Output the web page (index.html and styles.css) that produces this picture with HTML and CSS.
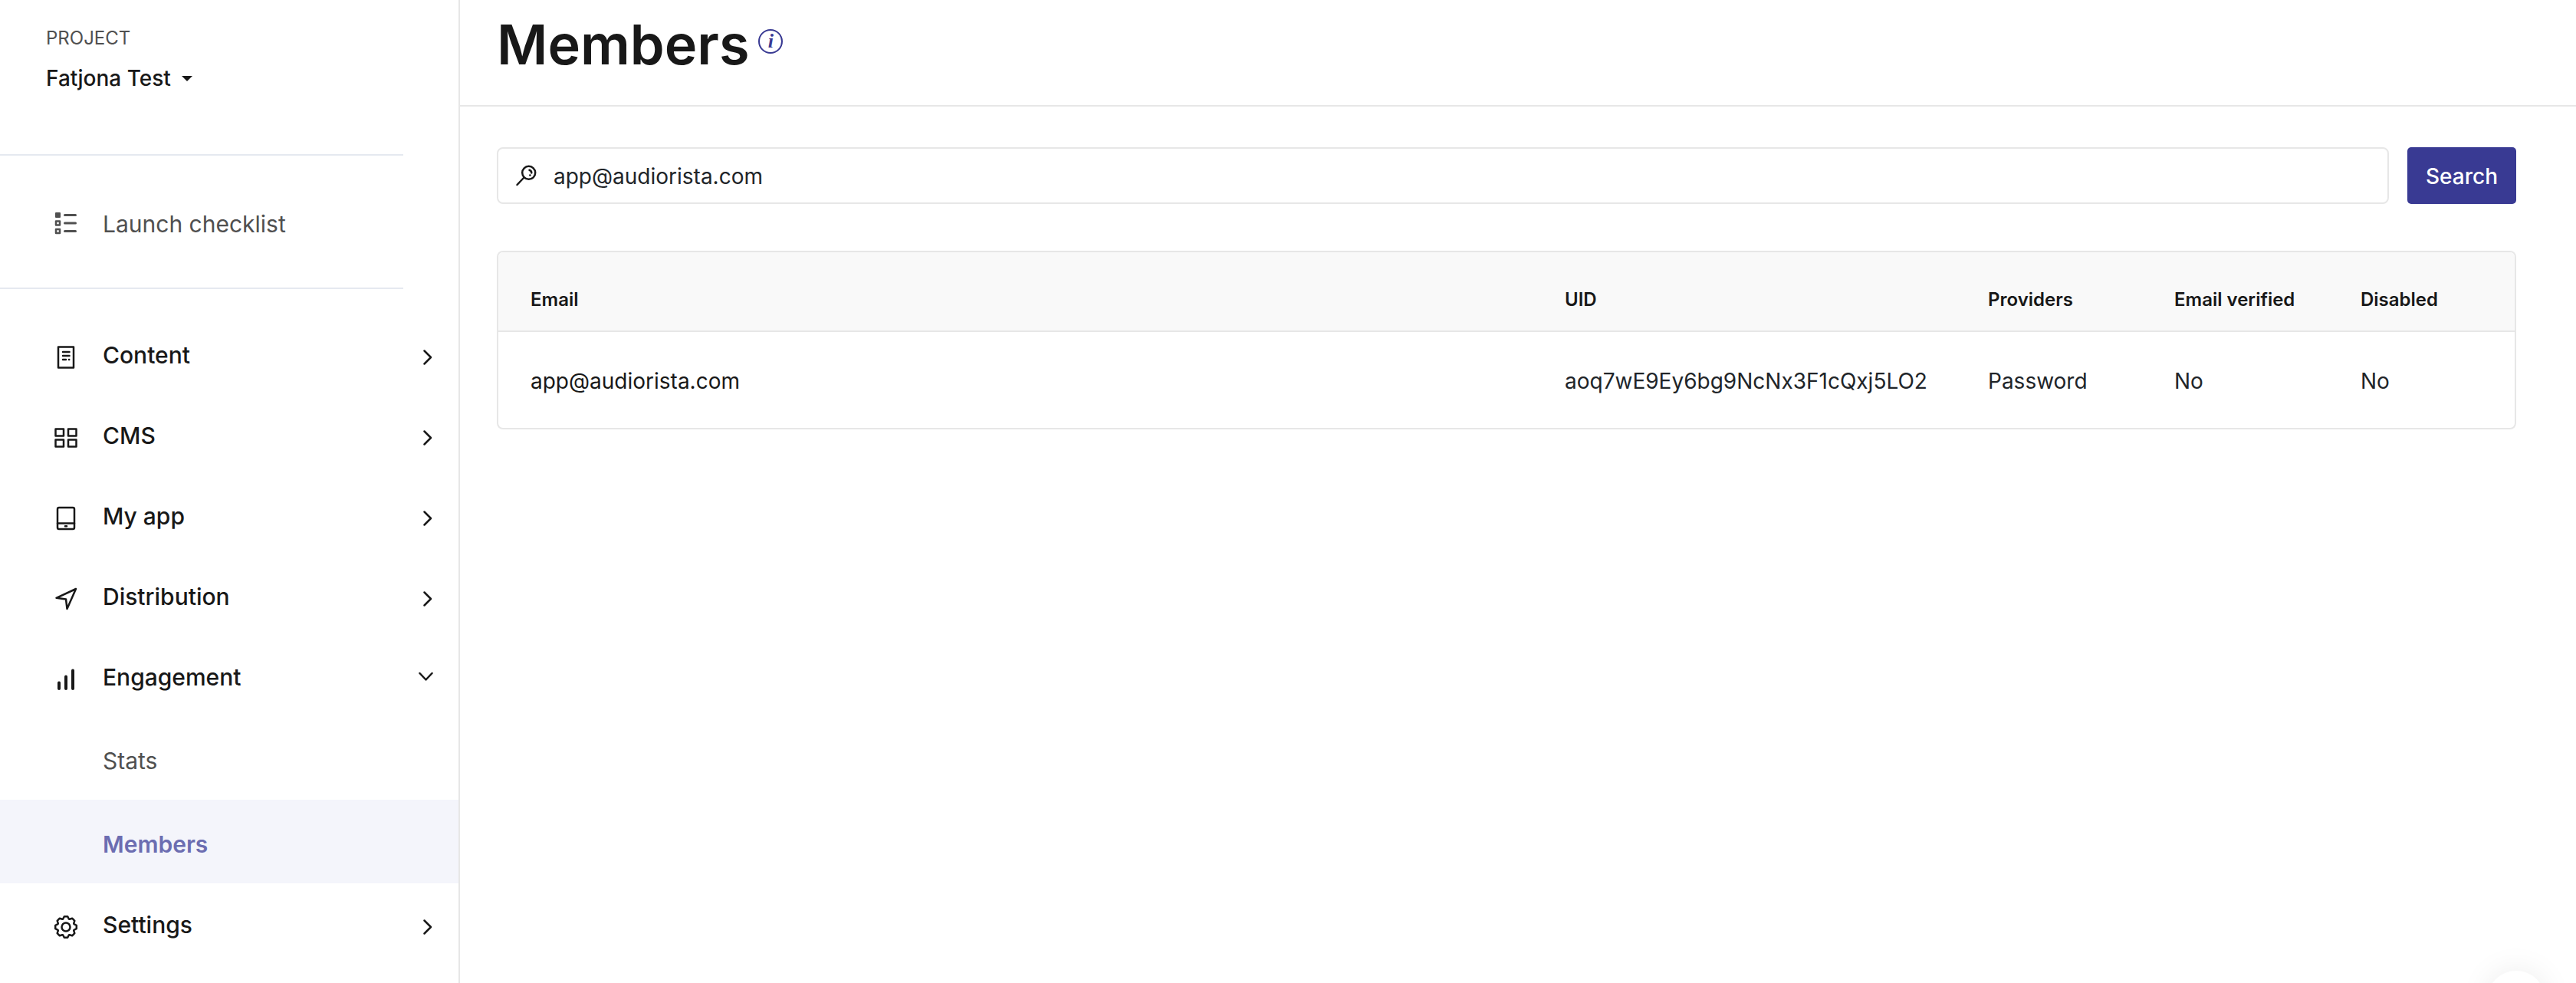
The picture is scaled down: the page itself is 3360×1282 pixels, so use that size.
FILE: index.html
```
<!DOCTYPE html>
<html lang="en">
<head>
	<meta charset="UTF-8">
	<title>Members</title>
	<link rel="stylesheet" href="styles.css">
</head>
<body>
<div class="layout">
	<aside class="sidebar">
		<div class="project">
			<div class="project-label">PROJECT</div>
			<button class="project-select">Fatjona Test <span class="caret"></span></button>
		</div>
		<div class="launch">
			<a class="launch-link" href="#">
				<svg class="icon" viewBox="0 0 40 40">
					<rect class="solid" x="6" y="5" width="7" height="7" rx="1"/>
					<rect x="7" y="16.5" width="5" height="5"/>
					<rect x="7" y="27" width="5" height="5"/>
					<path class="thick" d="M18.5 8.5h14M18.5 19h14M18.5 29.5h14"/>
				</svg>
				Launch checklist
			</a>
		</div>
		<nav class="nav">
			<button class="nav-item">
				<svg class="icon" viewBox="0 0 40 40">
					<rect x="10" y="6.5" width="20" height="27"/>
					<path d="M16 13h8.5M16 18h8.5M16 23h4M24 23h.2"/>
				</svg>
				Content
				<svg class="arrow" viewBox="0 0 24 24"><path d="M7.5 3.5L16 12L7.5 20.5"/></svg>
			</button>
			<button class="nav-item">
				<svg class="icon" viewBox="0 0 40 40">
					<rect x="6.5" y="8.5" width="10.5" height="9"/>
					<rect x="23" y="8.5" width="10.5" height="9"/>
					<rect x="6.5" y="22.5" width="10.5" height="9"/>
					<rect x="23" y="22.5" width="10.5" height="9"/>
				</svg>
				CMS
				<svg class="arrow" viewBox="0 0 24 24"><path d="M7.5 3.5L16 12L7.5 20.5"/></svg>
			</button>
			<button class="nav-item">
				<svg class="icon" viewBox="0 0 40 40">
					<rect x="9" y="6" width="22" height="28" rx="2"/>
					<path d="M9 26.5h22M19 30.3h2"/>
				</svg>
				My app
				<svg class="arrow" viewBox="0 0 24 24"><path d="M7.5 3.5L16 12L7.5 20.5"/></svg>
			</button>
			<button class="nav-item">
				<svg class="icon" viewBox="0 0 40 40">
					<path d="M33 7L7.5 18.8L20 20.5L21.5 33Z"/>
				</svg>
				Distribution
				<svg class="arrow" viewBox="0 0 24 24"><path d="M7.5 3.5L16 12L7.5 20.5"/></svg>
			</button>
			<button class="nav-item">
				<svg class="icon" viewBox="0 0 40 40">
					<path class="bars" d="M11 24.5V32M20 16.5V32M29 8.5V32"/>
				</svg>
				Engagement
				<svg class="arrow down" viewBox="0 0 24 24"><path d="M1.5 7L9.5 15.5L17.5 7"/></svg>
			</button>
			<a class="sub-item" href="#">Stats</a>
			<a class="sub-item active" href="#">Members</a>
			<button class="nav-item">
				<svg class="icon" viewBox="0 0 40 40">
					<path d="M17.8 6.2H22.2L23.8 9.5L24.7 9.8L28.2 8.7L31.3 11.8L30.2 15.3L30.5 16.2L33.8 17.8V22.2L30.5 23.8L30.2 24.7L31.3 28.2L28.2 31.3L24.7 30.2L23.8 30.5L22.2 33.8H17.8L16.2 30.5L15.3 30.2L11.8 31.3L8.7 28.2L9.8 24.7L9.5 23.8L6.2 22.2V17.8L9.5 16.2L9.8 15.3L8.7 11.8L11.8 8.7L15.3 9.8L16.2 9.5Z"/>
					<circle cx="20" cy="20" r="5.5"/>
				</svg>
				Settings
				<svg class="arrow" viewBox="0 0 24 24"><path d="M7.5 3.5L16 12L7.5 20.5"/></svg>
			</button>
		</nav>
	</aside>
	<main class="main">
		<header class="header">
			<h1 class="title">Members</h1>
			<button class="info" aria-label="About members">i</button>
		</header>
		<div class="content">
			<form class="search">
				<label class="search-box">
					<svg class="search-icon" viewBox="0 0 32 32">
						<circle cx="19.7" cy="12.3" r="8.5"/>
						<path d="M13.5 18.5L4.5 28M20.5 8.8a4 4 0 0 1 2.8 3.6M21.3 15.6h.2"/>
					</svg>
					<input class="search-input" type="text" aria-label="Search members" value="app@audiorista.com">
				</label>
				<button class="search-btn" type="button">Search</button>
			</form>
			<div class="table-wrap">
				<table class="table">
					<thead>
						<tr>
							<th>Email</th>
							<th class="col-uid">UID</th>
							<th class="col-small">Providers</th>
							<th class="col-small">Email verified</th>
							<th class="col-small">Disabled</th>
						</tr>
					</thead>
					<tbody>
						<tr>
							<td class="email">app@audiorista.com</td>
							<td>aoq7wE9Ey6bg9NcNx3F1cQxj5LO2</td>
							<td>Password</td>
							<td>No</td>
							<td>No</td>
						</tr>
					</tbody>
				</table>
			</div>
		</div>
	</main>
</div>
<button class="chat" aria-label="Chat"></button>
</body>
</html>
```
FILE: styles.css
```
* {
	box-sizing: border-box;
}
body {
	margin: 0;
	background-color: #fff;
	color: #181818;
	font-family: Inter, "Liberation Sans", sans-serif;
	font-size: 28px;
}
button, input {
	font: inherit;
	color: inherit;
	border: none;
	background: none;
	padding: 0;
}
a {
	color: inherit;
	text-decoration: none;
}
.layout {
	display: flex;
	min-height: 100vh;
}

/* sidebar */
.sidebar {
	flex: none;
	width: 600px;
	border-right: 2px solid #e7e7e7;
}
.project {
	margin-right: 72px;
	padding: 36px 0 79px 60px;
	border-bottom: 2px solid #e5e9f0;
}
.project-label {
	margin-bottom: 18px;
	color: #505050;
	font-size: 24px;
	line-height: 28px;
}
.project-select {
	display: flex;
	align-items: center;
	gap: 14px;
	font-weight: 500;
	line-height: 40px;
}
.caret {
	border: 7px solid transparent;
	border-top-color: #181818;
	border-bottom: none;
}
.launch {
	margin-right: 72px;
	border-bottom: 2px solid #e5e9f0;
}
.launch-link {
	display: flex;
	align-items: center;
	gap: 28px;
	height: 172px;
	padding: 6px 0 0 66px;
	color: #505050;
	font-size: 30px;
}
.nav {
	padding-top: 32px;
	font-size: 30px;
}
.nav-item {
	display: flex;
	align-items: center;
	gap: 28px;
	width: 100%;
	height: 105px;
	padding: 2px 28px 0 66px;
	font-weight: 500;
}
.icon {
	flex: none;
	width: 40px;
	height: 40px;
	fill: none;
	stroke: currentColor;
	stroke-width: 2.5px;
	stroke-linecap: round;
	stroke-linejoin: round;
}
.icon .solid {
	fill: currentColor;
	stroke: none;
}
.icon .thick {
	stroke-width: 3px;
}
.icon .bars {
	stroke-width: 4px;
}
.arrow {
	width: 24px;
	height: 24px;
	margin-left: auto;
	fill: none;
	stroke: currentColor;
	stroke-width: 2.5px;
	stroke-linecap: round;
	stroke-linejoin: round;
}
.nav-item .icon, .nav-item .arrow {
	margin-top: 6px;
}
.nav-item .arrow.down {
	margin-top: 0;
}
.sub-item {
	display: flex;
	align-items: center;
	height: 109px;
	padding: 6px 0 0 134px;
	color: #505050;
}
.sub-item.active {
	background-color: #f4f5fb;
	color: #6c6db1;
	font-weight: 600;
}

/* page */
.main {
	flex: 1;
	min-width: 0;
}
.header {
	display: flex;
	align-items: center;
	gap: 12px;
	padding: 0 48px 21px;
	border-bottom: 2px solid #e7e7e7;
}
.title {
	margin: 0;
	font-size: 72px;
	font-weight: 600;
	line-height: 116px;
}
.info {
	width: 32px;
	height: 32px;
	margin-bottom: 8px;
	border: 2px solid #393a93;
	border-radius: 50%;
	color: #393a93;
	font: italic bold 26px/28px "Liberation Serif", serif;
}
.content {
	padding: 53px 78px 0 48px;
}
.search {
	display: flex;
	gap: 24px;
	margin-bottom: 61px;
}
.search-box {
	display: flex;
	flex: 1;
	align-items: center;
	gap: 20px;
	height: 74px;
	padding: 0 20px;
	border: 2px solid #e7e7e7;
	border-radius: 8px;
	color: #212529;
}
.search-icon {
	width: 32px;
	height: 32px;
	fill: none;
	stroke: #181818;
	stroke-width: 2.5px;
	stroke-linecap: round;
}
.search-input {
	flex: 1;
	height: 100%;
	padding-top: 2px;
	outline: none;
}
.search-btn {
	padding: 2px 24px 0;
	border-radius: 5px;
	background-color: #393a93;
	color: #fff;
	font-weight: 500;
}
.table-wrap {
	overflow: hidden;
	border: 2px solid #e7e7e7;
	border-radius: 8px;
}
.table {
	width: 100%;
	border-collapse: separate;
	border-spacing: 0;
	table-layout: fixed;
}
.table th {
	height: 104px;
	padding: 20px 0 0 42px;
	border-bottom: 2px solid #e7e7e7;
	background-color: #f9f9f9;
	font-size: 24px;
	font-weight: 600;
	text-align: left;
}
.table td {
	height: 125px;
	padding: 2px 0 0 42px;
	color: #212529;
}
.table .email {
	color: #181818;
}
.col-uid {
	width: 552px;
}
.col-small {
	width: 243px;
}

/* chat bubble */
.chat {
	position: fixed;
	right: 40px;
	bottom: -60px;
	width: 76px;
	height: 76px;
	border-radius: 50%;
	background-color: #fff;
	box-shadow: 0 0 40px rgba(0, 0, 0, 0.08);
}
```
